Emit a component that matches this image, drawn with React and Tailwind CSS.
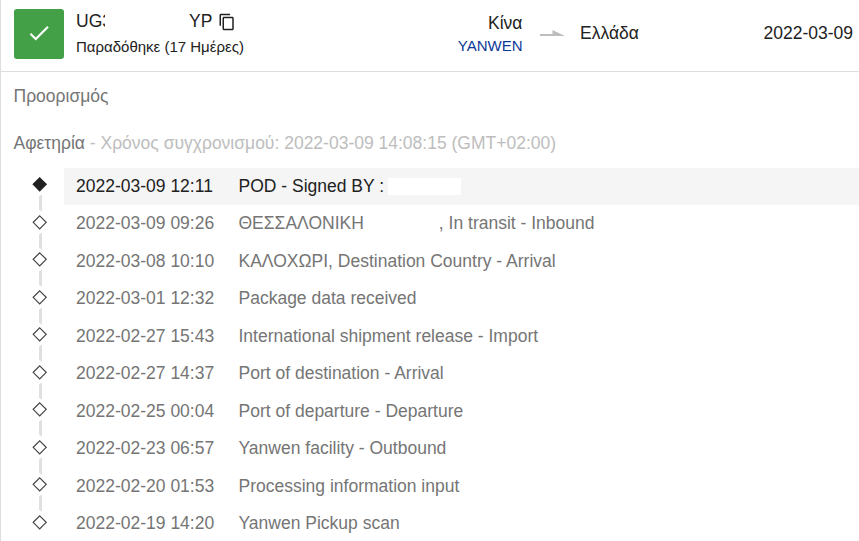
const events = [
  { time: "2022-03-09 12:11", text: "POD - Signed BY :", masked: true },
  { time: "2022-03-09 09:26", text: "ΘΕΣΣΑΛΟΝΙΚΗ", rest: ", In transit - Inbound" },
  { time: "2022-03-08 10:10", text: "ΚΑΛΟΧΩΡΙ, Destination Country - Arrival" },
  { time: "2022-03-01 12:32", text: "Package data received" },
  { time: "2022-02-27 15:43", text: "International shipment release - Import" },
  { time: "2022-02-27 14:37", text: "Port of destination - Arrival" },
  { time: "2022-02-25 00:04", text: "Port of departure - Departure" },
  { time: "2022-02-23 06:57", text: "Yanwen facility - Outbound" },
  { time: "2022-02-20 01:53", text: "Processing information input" },
  { time: "2022-02-19 14:20", text: "Yanwen Pickup scan" },
];

function Marker({ filled, last }) {
  return (
    <svg className="block h-[37.5px] w-[63px] shrink-0 overflow-visible" viewBox="0 0 63 37.5">
      <path
        d="M38.7 9.8 45.200 16.3 38.7 22.8 32.2 16.3Z"
        fill={filled ? "#212121" : "#fff"}
        stroke={filled ? "#212121" : "#424242"}
        strokeWidth="1.2"
      />
      {/* connector to the next event */}
      {!last && <path d="M38 28.500 41 26.500V43.7L38 41.7Z" fill="#e0e0e0" />}
    </svg>
  );
}

function Header() {
  return (
    <header className="flex h-[72px] items-start border-b border-[#dedede] pl-[13px] text-[#212121]">
      <div className="mt-[9px] flex h-[50px] w-[50px] items-center justify-center rounded-[3px] bg-[#43a047] pr-px pb-[2px]">
        <svg className="h-[26px] w-[26px]" viewBox="0 0 24 24" fill="#fff">
          <path d="M9 16.17 4.83 12l-1.42 1.41L9 19 21 7l-1.41-1.41z" />
        </svg>
      </div>
      <div className="ml-3 w-[360px] pt-[10px]">
        <div className="flex h-[22px] items-center">
          <span className="w-[29px] overflow-hidden whitespace-nowrap">UG3</span>
          <span className="ml-[84px]">YP</span>
          <svg className="mt-px ml-[6px] h-[18px] w-[18px]" viewBox="0 0 24 24" fill="#212121">
            <path d="M16 1H4c-1.1 0-2 .9-2 2v14h2V3h12V1zm3 4H8c-1.1 0-2 .9-2 2v14c0 1.1.9 2 2 2h11c1.1 0 2-.9 2-2V7c0-1.1-.9-2-2-2zm0 16H8V7h11v14z" />
          </svg>
        </div>
        <div className="mt-1 text-[15px] leading-[22px]">Παραδόθηκε (17 Ημέρες)</div>
      </div>
      <div className="w-[86.500px] pt-[12px] text-right">
        <div className="leading-[22px]">Κίνα</div>
        <div className="text-[15px] leading-[24px] text-[#0d3898]">YANWEN</div>
      </div>
      <svg className="mt-[30px] ml-[17.500px] h-[7px] w-[25px]" viewBox="0 0 25 7" fill="#bdbdbd">
        <path d="M0 4H12.500V0L25 6H0Z" />
      </svg>
      <div className="ml-[15px] pt-[22px] leading-[22px]">Ελλάδα</div>
      <div className="ml-auto pt-[22px] pr-[6px] leading-[22px]">2022-03-09</div>
    </header>
  );
}

export default function App() {
  return (
    <div className="h-[541px] w-[859px] overflow-hidden border-l border-[#dedede] bg-white font-['Liberation_Sans',Arial,sans-serif] text-[17.5px] text-[#757575]">
      <Header />
      <div className="h-[47px] pl-[12.500px] leading-[49px]">Προορισμός</div>
      <div className="h-[49px] pl-[12.500px] leading-[49px]">
        Αφετηρία <span className="text-[#bdbdbd]">- Χρόνος συγχρονισμού: 2022-03-09 14:08:15 (GMT+02:00)</span>
      </div>
      <ul>
        {events.map((e, i) => (
          <li key={e.time} className="flex h-[37.5px] items-start">
            <Marker filled={i === 0} last={i === events.length - 1} />
            <div
              className={`flex h-[37px] flex-1 items-center pb-[1.500px] pl-3 whitespace-nowrap ${i === 0 ? "bg-[#f5f5f5] text-[#212121]" : ""}`}
            >
              <span className="w-[162.500px]">{e.time}</span>
              <span>{e.text}</span>
              {e.masked && <span className="mt-px ml-1 h-[17px] w-[73px] bg-white" />}
              {e.rest && <span className="ml-[75px]">{e.rest}</span>}
            </div>
          </li>
        ))}
      </ul>
    </div>
  );
}
